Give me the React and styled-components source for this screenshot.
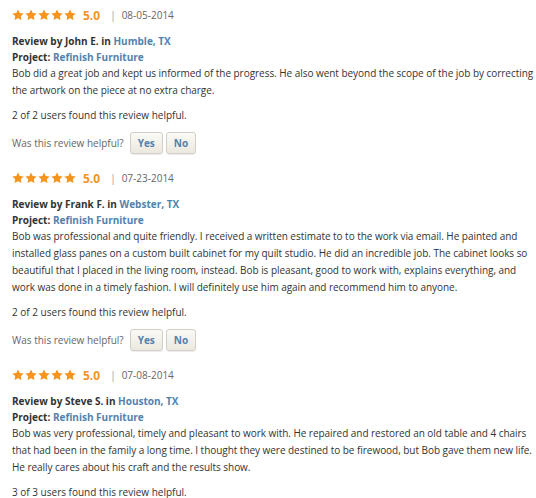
import React from "react";
import styled, { createGlobalStyle } from "styled-components";

const Global = createGlobalStyle`
  body {
    margin: 0;
    background: #fff;
    font-family: "Open Sans", "Liberation Sans", sans-serif;
    color: #444;
  }
`;

const List = styled.div`
  width: 524px;
  padding: 7px 0 0 12px;
`;

const Review = styled.div`
  margin-bottom: 16px;
`;

const RatingRow = styled.div`
  display: flex;
  align-items: center;
  height: 16px;
  margin-bottom: 10px;
`;

const Stars = styled.div`
  display: flex;
  gap: 1px;
`;

const Score = styled.span`
  color: #f7941d;
  font-weight: 700;
  font-size: 12px;
  margin-left: 7px;
`;

const Sep = styled.span`
  color: #999;
  font-size: 10px;
  margin: 0 6px 0 10px;
`;

const DateText = styled.span`
  color: #666;
  font-size: 10px;
`;

const Line = styled.div`
  font-size: 10px;
  line-height: 16px;
  color: #333;
  font-weight: 700;
`;

const Link = styled.a`
  color: #5282ad;
  text-decoration: none;
  font-weight: 700;
`;

const Body = styled.p`
  margin: 0;
  font-size: 10px;
  line-height: 17px;
  letter-spacing: -0.04px;
  color: #333;
`;

const Helpful = styled.p`
  margin: 8px 0 0;
  font-size: 10px;
  line-height: 17px;
  color: #333;
`;

const Vote = styled.div`
  display: flex;
  align-items: center;
  margin-top: 8px;
  gap: 3px;
`;

const Question = styled.span`
  font-size: 10px;
  color: #666;
  margin-right: 3px;
`;

const Button = styled.button`
  font-family: inherit;
  font-size: 10px;
  font-weight: 700;
  color: #5282ad;
  height: 22px;
  padding: 0 7px;
  border: 1px solid #d3cfc6;
  border-radius: 3px;
  background: linear-gradient(#fbfaf6, #ebe8df);
  box-shadow: 0 1px 1px rgba(0, 0, 0, 0.08);
  cursor: pointer;
`;

const Star = () => (
  <svg width="12" height="12" viewBox="0 0 24 24">
    <path
      fill="#f7941d"
      d="M12 0.8l3.4 7.2 7.9.9-5.8 5.4 1.5 7.9L12 18.3l-7 3.9 1.5-7.9L0.7 8.9l7.9-.9z"
    />
  </svg>
);

const reviews = [
  {
    date: "08-05-2014",
    name: "John E.",
    place: "Humble, TX",
    text: "Bob did a great job and kept us informed of the progress. He also went beyond the scope of the job by correcting the artwork on the piece at no extra charge.",
    helpful: "2 of 2",
  },
  {
    date: "07-23-2014",
    name: "Frank F.",
    place: "Webster, TX",
    text: "Bob was professional and quite friendly. I received a written estimate to to the work via email. He painted and installed glass panes on a custom built cabinet for my quilt studio. He did an incredible job. The cabinet looks so beautiful that I placed in the living room, instead. Bob is pleasant, good to work with, explains everything, and work was done in a timely fashion. I will definitely use him again and recommend him to anyone.",
    helpful: "2 of 2",
  },
  {
    date: "07-08-2014",
    name: "Steve S.",
    place: "Houston, TX",
    text: "Bob was very professional, timely and pleasant to work with. He repaired and restored an old table and 4 chairs that had been in the family a long time. I thought they were destined to be firewood, but Bob gave them new life. He really cares about his craft and the results show.",
    helpful: "3 of 3",
  },
];

export default function App() {
  return (
    <>
      <Global />
      <List>
        {reviews.map((r) => (
          <Review key={r.date}>
            <RatingRow>
              <Stars>
                {[0, 1, 2, 3, 4].map((i) => (
                  <Star key={i} />
                ))}
              </Stars>
              <Score>5.0</Score>
              <Sep>|</Sep>
              <DateText>{r.date}</DateText>
            </RatingRow>
            <Line>
              Review by {r.name} in <Link href="#">{r.place}</Link>
            </Line>
            <Line>
              Project: <Link href="#">Refinish Furniture</Link>
            </Line>
            <Body>{r.text}</Body>
            <Helpful>{r.helpful} users found this review helpful.</Helpful>
            <Vote>
              <Question>Was this review helpful?</Question>
              <Button>Yes</Button>
              <Button>No</Button>
            </Vote>
          </Review>
        ))}
      </List>
    </>
  );
}
